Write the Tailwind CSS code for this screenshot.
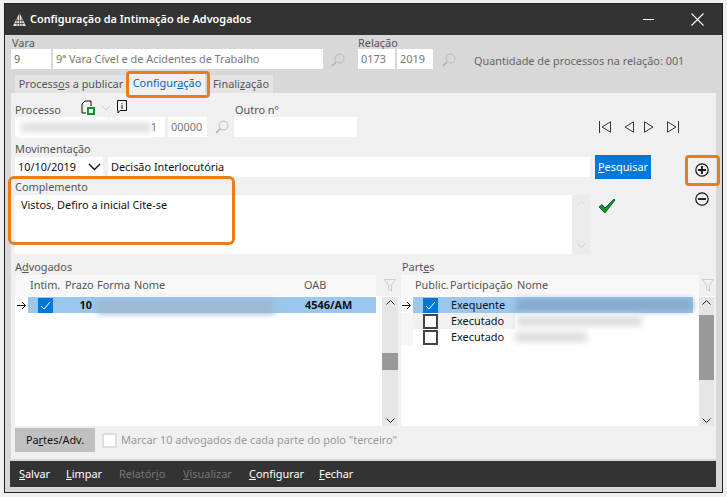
<!DOCTYPE html>
<html lang="pt-BR">
<head>
    <meta charset="UTF-8">
    <title>Configuração da Intimação de Advogados</title>
    <script src="https://cdn.jsdelivr.net/npm/@tailwindcss/browser@4"></script>
</head>
<body class="h-[497px] w-[727px] overflow-hidden bg-[#f0f0f0] pt-[3px] pl-[4px] font-['Noto_Sans',sans-serif] text-[10.9px] text-[#555]">
    <div class="relative flex h-[490px] w-[719px] flex-col border border-[#222] bg-[#d8d8d8]">

        <!-- title bar -->
        <div class="flex h-[31px] items-center bg-[#333] pl-[7px] text-white">
            <svg width="15" height="15" viewBox="0 0 15 15" class="mr-[3px]"><path d="M7.500 1L14 14H1Z" fill="#e4e4e4"/><path d="M7.500 1V14M5 6V14M10 6V14M2.500 11.500H12.500M4 8.500H11" stroke="#333" stroke-width="0.700"/></svg>
            <span class="font-semibold">Configuração da Intimação de Advogados</span>
            <div class="ml-auto flex items-center">
                <div class="mr-[37px] h-px w-[11px] bg-white"></div>
                <svg width="13" height="13" viewBox="0 0 13 13" class="mr-[18px]"><path d="M.5.5L12.500 12.500M12.500.5L.5 12.500" stroke="#fff" stroke-width="1.100"/></svg>
            </div>
        </div>

        <!-- vara / relacao -->
        <div class="flex h-[38px] pl-[6px]">
            <div class="w-[347px]">
                <div class="h-[14px] pl-[1px] leading-[15px]">Vara</div>
                <div class="flex items-center gap-[2px]">
                    <div class="flex h-[20px] w-[40px] items-center bg-white pl-[3px] text-[#666]">9</div>
                    <div class="flex h-[20px] w-[270px] items-center bg-white pl-[3px] text-[#777]">9ª Vara Cível e de Acidentes de Trabalho</div>
                    <svg width="14" height="14" viewBox="0 0 14 14" class="ml-[6px] mt-[1px]"><circle cx="8.500" cy="5.500" r="4.500" fill="none" stroke="#bbb"/><path d="M5 9L1 13" stroke="#aaa" stroke-width="1.500"/></svg>
                </div>
            </div>
            <div class="w-[115px]">
                <div class="h-[14px] leading-[15px]">Relação</div>
                <div class="flex items-center gap-[2px]">
                    <div class="flex h-[20px] w-[37px] items-center bg-white pl-[3px] text-[#777]">0173</div>
                    <div class="flex h-[20px] w-[36px] items-center bg-white pl-[3px] text-[#777]">2019</div>
                    <svg width="14" height="14" viewBox="0 0 14 14" class="ml-[7px] mt-[1px]"><circle cx="8.500" cy="5.500" r="4.500" fill="none" stroke="#bbb"/><path d="M5 9L1 13" stroke="#aaa" stroke-width="1.500"/></svg>
                </div>
            </div>
            <div class="pl-[1px] pt-[18px] leading-[16px] text-[#666]">Quantidade de processos na relação: 001</div>
        </div>

        <!-- tabs -->
        <div class="flex h-[20px] items-end pl-[10px]">
            <div class="flex h-[18px] w-[112px] items-center justify-center bg-[#e4e4e4]"><span>Process<u>o</u>s a publicar</span></div>
            <div class="ml-[2px] flex h-[20px] w-[76px] items-center justify-center border-t border-[#0078d7] bg-[#f0f0f0] text-[#0067c0]"><span>Configur<u>a</u>ção</span></div>
            <div class="ml-[4px] flex h-[18px] w-[64px] items-center justify-center bg-[#e4e4e4]"><span>Finali<u>z</u>ação</span></div>
        </div>

        <!-- panel -->
        <div class="ml-[6px] flex h-[366px] w-[705px] flex-col bg-[#f0f0f0] px-[4px]">
            <div class="flex h-[24px] items-end">
                <div class="w-[66px] translate-y-[1px] leading-[16px]">Processo</div>
                <svg width="14" height="15" viewBox="0 0 14 15" class="mb-[2px]"><path d="M1 13V4L4 1H10V6M1 13H5" fill="none" stroke="#111"/><rect x="7" y="8" width="6" height="6" fill="#fff" stroke="#0a9a2a" stroke-width="2"/></svg>
                <svg width="10" height="6" viewBox="0 0 10 6" class="mb-[6px] ml-[6px]"><path d="M1 1L5 5L9 1" fill="none" stroke="#ccc"/></svg>
                <svg width="10" height="14" viewBox="0 0 10 14" class="mb-[3px] ml-[6px]"><path d="M.5.5H9.500V10.500H3L1 13V10.500H.5Z M5 3V3.800M5 4.800V9" fill="none" stroke="#111"/></svg>
                <div class="ml-[108px] translate-y-[1px] leading-[16px]">Outro nº</div>
            </div>
            <div class="flex h-[20px] items-center">
                <div class="relative h-[20px] w-[92px] bg-white">
                    <div class="absolute left-[4px] top-[2px] h-[19px] w-[134px] bg-white blur-[1px]"></div>
                    <div class="absolute left-[6px] top-[6px] h-[9px] w-[130px] bg-[#ddd] blur-[3px]"></div>
                </div>
                <div class="ml-[3px] flex h-[20px] w-[55px] items-center justify-end bg-white pr-[8px] text-[#777]"><span class="relative">1</span></div>
                <div class="ml-[3px] flex h-[20px] w-[39px] items-center bg-white pl-[3px] text-[#777]">00000</div>
                <svg width="14" height="14" viewBox="0 0 14 14" class="ml-[8px]"><circle cx="8.500" cy="5.500" r="4.500" fill="none" stroke="#bbb"/><path d="M5 9L1 13" stroke="#aaa" stroke-width="1.500"/></svg>
                <div class="ml-[5px] h-[20px] w-[123px] bg-white"></div>
                <div class="ml-[242px] flex items-center">
                    <svg width="12" height="12" viewBox="0 0 12 12"><path d="M.5 0V12M11.500.8V11.200L3 6Z" fill="none" stroke="#333"/></svg>
                    <svg width="10" height="12" viewBox="0 0 10 12" class="ml-[13px]"><path d="M9.500.8V11.200L1 6Z" fill="none" stroke="#333"/></svg>
                    <svg width="10" height="12" viewBox="0 0 10 12" class="ml-[10px]"><path d="M.5.8V11.200L9 6Z" fill="none" stroke="#333"/></svg>
                    <svg width="12" height="12" viewBox="0 0 12 12" class="ml-[13px]"><path d="M11.500 0V12M.5.8V11.200L9 6Z" fill="none" stroke="#333"/></svg>
                </div>
            </div>
            <div class="mt-[4px] h-[14px] leading-[16px]">Movimentação</div>
            <div class="flex h-[24px] items-center">
                <div class="flex h-[20px] w-[88px] items-center justify-between bg-white pl-[3px] pr-[2px] text-[#111]">10/10/2019
                    <svg width="13" height="8" viewBox="0 0 13 8"><path d="M1 1L6.500 6.500L12 1" fill="none" stroke="#111" stroke-width="1.400"/></svg>
                </div>
                <div class="ml-[5px] flex h-[20px] w-[482px] items-center bg-white pl-[3px] text-[#111]">Decisão Interlocutória</div>
                <div class="ml-[5px] flex h-[24px] w-[56px] items-center justify-center bg-[#0078d7] text-white"><span><u>P</u>esquisar</span></div>
                <svg width="14" height="14" viewBox="0 0 14 14" class="ml-[44px] mt-[6px]"><circle cx="7" cy="7" r="6.200" fill="none" stroke="#111" stroke-width="1.200"/><path d="M3 7H11M7 3V11" stroke="#111" stroke-width="1.800"/></svg>
            </div>
            <div class="h-[16px] leading-[16px]">Complemento</div>
            <div class="flex">
                <div class="flex h-[59px] w-[575px] justify-between bg-white">
                    <div class="pl-[6px] pt-[1px] leading-[18px] text-[#111]">Vistos, Defiro a inicial Cite-se</div>
                    <div class="flex w-[18px] flex-col items-center justify-between bg-[#ebebeb] py-[6px]">
                        <svg width="9" height="5" viewBox="0 0 9 5"><path d="M.5 4.500L4.500.5L8.500 4.500" fill="none" stroke="#ddd"/></svg>
                        <svg width="9" height="5" viewBox="0 0 9 5"><path d="M.5.5L4.500 4.500L8.500.5" fill="none" stroke="#ccc"/></svg>
                    </div>
                </div>
                <svg width="18" height="16" viewBox="0 0 18 16" class="ml-[8px] mt-[3px]"><path d="M1 9L4 6.500L7 10L16 1L17 2L7 15Z" fill="#0b9a1e" stroke="#023" stroke-width=".7"/></svg>
                <svg width="14" height="14" viewBox="0 0 14 14" class="ml-[79px] mt-[-3px]"><circle cx="7" cy="7" r="6.200" fill="none" stroke="#111" stroke-width="1.200"/><path d="M3 7H11" stroke="#111" stroke-width="1.800"/></svg>
            </div>

            <!-- grids -->
            <div class="mt-[4px] flex h-[17px] items-end">
                <div class="w-[387px] leading-[16px]">A<u>d</u>vogados</div>
                <div class="leading-[16px]">Part<u>e</u>s</div>
            </div>
            <div class="flex h-[151px]">
                <div class="flex w-[385px] flex-col bg-white">
                    <div class="flex h-[21px] shrink-0 items-center bg-[#f0f0f0]">
                        <div class="flex h-[21px] w-[361px] items-center bg-[#f8f8f8]">
                            <span class="ml-[15px] w-[35px]">Intim.</span>
                            <span class="w-[32px]">Prazo</span>
                            <span class="w-[37px]">Forma</span>
                            <span class="w-[170px]">Nome</span>
                            <span>OAB</span>
                        </div>
                        <svg width="12" height="14" viewBox="0 0 12 14" class="ml-auto mr-[2px]"><path d="M.5.5H11.500L7.500 6V12L4.500 10V6Z" fill="none" stroke="#ccc"/></svg>
                    </div>
                    <div class="flex min-h-0 flex-1 gap-[6px] pt-[1px]">
                        <div class="w-[361px]">
                            <div class="relative flex h-[16px] items-center text-[#111]">
                                <div class="flex h-[16px] w-[13px] shrink-0 items-center justify-center">
                                    <svg width="10" height="9" viewBox="0 0 10 9"><path d="M0 4.500H8M5 1L8.500 4.500L5 8" fill="none" stroke="#111"/></svg>
                                </div>
                                <div class="flex h-[16px] flex-1 items-center bg-[#9ac7ee]">
                                    <div class="ml-[10px] flex h-[15px] w-[15px] items-center justify-center bg-[#0078d7]">
                                        <svg width="11" height="9" viewBox="0 0 11 9"><path d="M1 5L4 8L10 1" fill="none" stroke="#fff"/></svg>
                                    </div>
                                    <span class="ml-[21px] w-[18px] text-right font-bold">10</span>
                                    <div class="ml-[5px] h-[14px] w-[178px] translate-y-[2px] bg-[#9db9d3] blur-[3px]"></div>
                                    <span class="ml-[30px] font-bold">4546/AM</span>
                                </div>
                            </div>
                        </div>
                        <div class="flex w-[16px] flex-col items-center bg-[#e6e6e6] py-[3px]">
                            <svg width="9" height="5" viewBox="0 0 9 5"><path d="M.5 4.500L4.500.5L8.500 4.500" fill="none" stroke="#222"/></svg>
                            <div class="mt-[48px] h-[17px] w-full bg-[#999]"></div>
                            <svg width="9" height="5" viewBox="0 0 9 5" class="mt-auto"><path d="M.5.5L4.500 4.500L8.500.5" fill="none" stroke="#222"/></svg>
                        </div>
                    </div>
                </div>
                <div class="ml-[3px] flex w-[313px] flex-col bg-white">
                    <div class="flex h-[21px] shrink-0 items-center bg-[#f0f0f0]">
                        <div class="flex h-[21px] w-[298px] items-center bg-[#f8f8f8]">
                            <span class="ml-[14px] w-[35px]">Public.</span>
                            <span class="w-[67px]">Participação</span>
                            <span>Nome</span>
                        </div>
                        <svg width="12" height="14" viewBox="0 0 12 14" class="ml-auto"><path d="M.5.5H11.500L7.500 6V12L4.500 10V6Z" fill="none" stroke="#ccc"/></svg>
                    </div>
                    <div class="flex min-h-0 flex-1 pt-[1px]">
                        <div class="w-[298px]">
                            <div class="flex h-[16px] items-center text-[#111]">
                                <div class="flex h-[16px] w-[12px] shrink-0 items-center justify-center">
                                    <svg width="10" height="9" viewBox="0 0 10 9"><path d="M0 4.500H8M5 1L8.500 4.500L5 8" fill="none" stroke="#111"/></svg>
                                </div>
                                <div class="flex h-[16px] w-[280px] items-center bg-[#9ac7ee]">
                                    <div class="ml-[10px] flex h-[15px] w-[15px] shrink-0 items-center justify-center bg-[#0078d7]">
                                        <svg width="11" height="9" viewBox="0 0 11 9"><path d="M1 5L4 8L10 1" fill="none" stroke="#fff"/></svg>
                                    </div>
                                    <span class="ml-[13px] w-[65px] shrink-0">Exequente</span>
                                    <div class="h-[12px] w-[177px] bg-[#86a9cb] blur-[3px]"></div>
                                </div>
                            </div>
                            <div class="flex h-[16px] items-center text-[#111]">
                                <div class="h-[16px] w-[12px] shrink-0 bg-[#f5f5f5]"></div>
                                <div class="flex h-[16px] w-[102px] shrink-0 items-center bg-[#f0f0f0]">
                                    <div class="ml-[10px] h-[15px] w-[15px] shrink-0 border-2 border-[#444] bg-white"></div>
                                    <span class="ml-[13px]">Executado</span>
                                </div>
                                <div class="ml-[2px] h-[10px] w-[125px] bg-[#ddd] blur-[3px]"></div>
                            </div>
                            <div class="flex h-[16px] items-center text-[#111]">
                                <div class="h-[16px] w-[12px] shrink-0 bg-[#f5f5f5]"></div>
                                <div class="ml-[10px] h-[15px] w-[15px] shrink-0 border-2 border-[#444] bg-white"></div>
                                <span class="ml-[13px] w-[52px]">Executado</span>
                                <div class="ml-[12px] h-[10px] w-[72px] bg-[#ddd] blur-[3px]"></div>
                            </div>
                        </div>
                        <div class="flex w-[15px] flex-col items-center bg-[#e6e6e6] py-[3px]">
                            <svg width="9" height="5" viewBox="0 0 9 5"><path d="M.5 4.500L4.500.5L8.500 4.500" fill="none" stroke="#222"/></svg>
                            <div class="mt-[10px] h-[65px] w-full bg-[#999]"></div>
                            <svg width="9" height="5" viewBox="0 0 9 5" class="mt-auto"><path d="M.5.5L4.500 4.500L8.500.5" fill="none" stroke="#222"/></svg>
                        </div>
                    </div>
                </div>
            </div>

            <!-- footer of panel -->
            <div class="mt-[2px] flex h-[24px] items-center">
                <div class="flex h-[24px] w-[80px] items-center justify-center bg-[#c0c0c0] text-[#111]"><span>Pa<u>r</u>tes/Adv.</span></div>
                <div class="ml-[7px] h-[15px] w-[15px] border-2 border-[#ddd] bg-white"></div>
                <span class="ml-[4px] text-[#999]">Marcar 10 advogados de cada parte do polo "terceiro"</span>
            </div>
        </div>

        <!-- bottom bar -->
        <div class="ml-[5px] mt-[2px] flex h-[26px] w-[706px] items-center bg-[#333] pl-[9px] text-white">
            <span class="w-[47px]"><u>S</u>alvar</span>
            <span class="w-[53px]"><u>L</u>impar</span>
            <span class="w-[64px] text-[#777]">Relatór<u>i</u>o</span>
            <span class="w-[66px] text-[#777]"><u>V</u>isualizar</span>
            <span class="w-[70px]"><u>C</u>onfigurar</span>
            <span><u>F</u>echar</span>
        </div>

        <!-- orange highlights drawn over the form -->
        <div class="absolute left-[121px] top-[67px] h-[27px] w-[84px] rounded-[4px] border-[3px] border-[#e67e1c]"></div>
        <div class="absolute left-[680px] top-[151px] h-[31px] w-[35px] rounded-[4px] border-[3px] border-[#e67e1c]"></div>
        <div class="absolute left-[3px] top-[172px] h-[69px] w-[227px] rounded-[6px] border-[3px] border-[#e67e1c]"></div>
    </div>
</body>
</html>
